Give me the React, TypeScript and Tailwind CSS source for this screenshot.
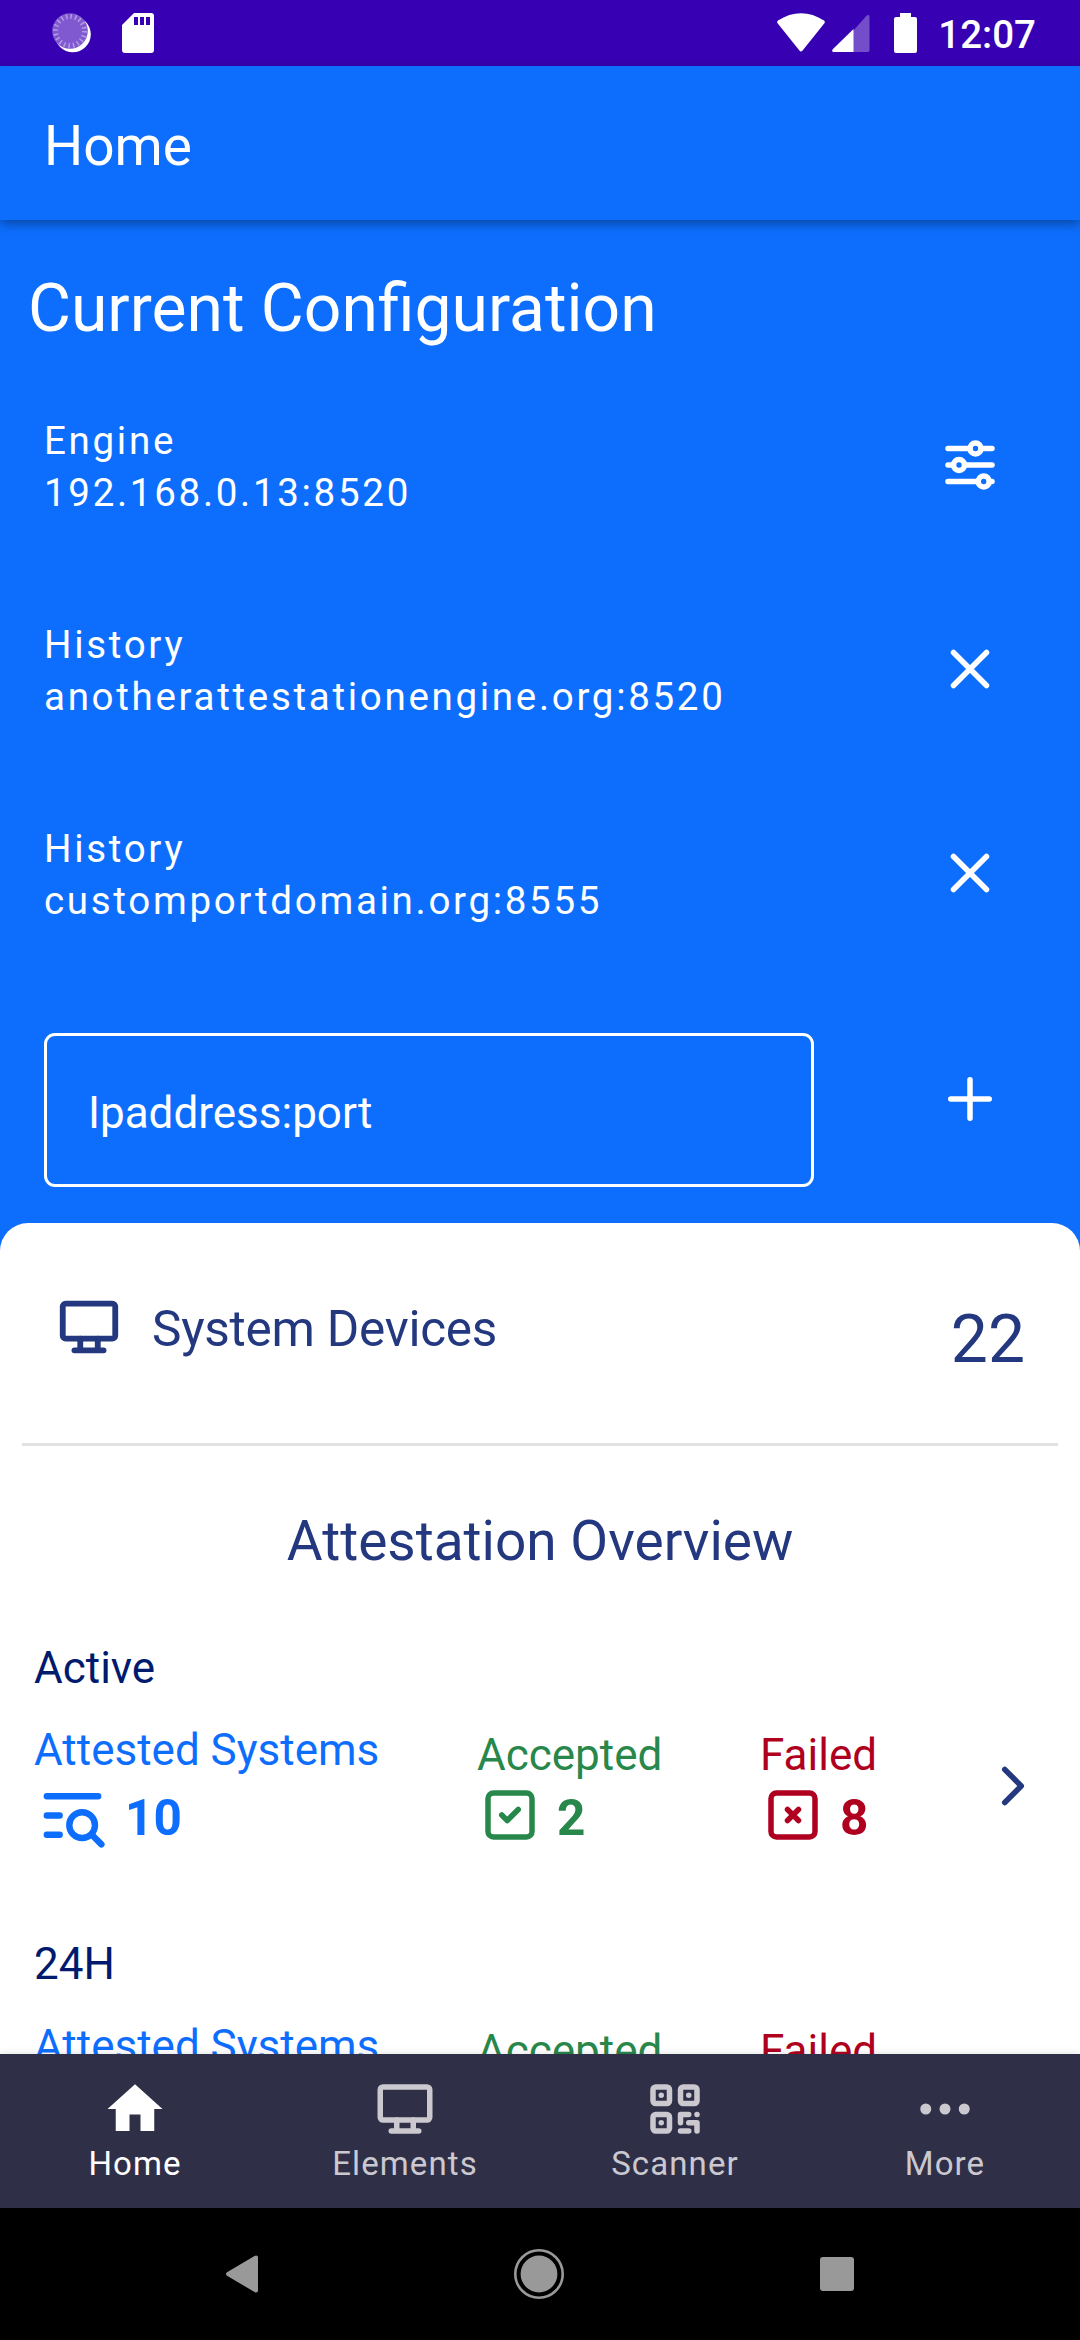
import type { ReactNode } from "react";

type IconProps = { className: string; children: ReactNode };

function Icon({ className, children }: IconProps) {
  return (
    <svg viewBox="0 0 24 24" fill="none" stroke="currentColor" strokeWidth={2} strokeLinecap="round" strokeLinejoin="round" className={`block shrink-0 ${className}`}>
      {children}
    </svg>
  );
}

const desktop = (
  <>
    <rect x="3" y="4" width="18" height="12" rx="1" />
    <path d="M7 20h10M9 16v4M15 16v4" />
  </>
);

const cross = <path d="M18 6L6 18M6 6l12 12" />;

function StatusBar() {
  return (
    <header className="flex h-[66px] shrink-0 items-center bg-[#3700b3] pl-[50px] pr-[44px] text-white">
      <svg viewBox="0 0 44 44" className="block h-[44px] w-[44px]">
        <circle cx="22.800" cy="23.300" r="18" fill="#fff" />
        <circle cx="20" cy="20" r="17.800" fill="#8058d0" />
        <circle cx="20" cy="20" r="14.500" fill="none" stroke="#b39be3" strokeWidth="5" strokeDasharray="1.5 3.055" />
      </svg>
      <svg viewBox="0 0 32 40" className="ml-[28px] block h-[40px] w-[32px]">
        <path d="M12 0h17a3 3 0 0 1 3 3v34a3 3 0 0 1-3 3H3a3 3 0 0 1-3-3V12z" fill="#fff" />
        <path d="M12 4h4v8h-4zM18 4h4v8h-4zM24 4h4v8h-4z" fill="#3700b3" />
      </svg>
      <div className="ml-auto flex items-center">
        <svg viewBox="0 0 48 40" className="block h-[40px] w-[48px]">
          <path d="M.8 10.5C-.2 9.300 0 8.300 1 7.600C15.500-2.200 32.500-2.200 47 7.600c1 .7 1.200 1.700.2 2.900L25.600 37.500c-1 1.300-2.200 1.300-3.200 0z" fill="#fff" />
        </svg>
        <svg viewBox="0 0 38 40" className="ml-[7px] block h-[40px] w-[38px]">
          <path d="M21 18L34.500 2.700C36 1.200 37.500 2 37.500 3.500V37c0 1.300-.7 2-2 2H21z" fill="#734dca" />
          <path d="M21.500 16v23H2c-2 0-2.400-1.600-1-3z" fill="#fff" />
        </svg>
        <svg viewBox="0 0 23 40" className="ml-[24px] block h-[40px] w-[23px]">
          <path d="M6 0h11v4h4a2 2 0 0 1 2 2v32a2 2 0 0 1-2 2H2a2 2 0 0 1-2-2V6a2 2 0 0 1 2-2h4z" fill="#fff" />
        </svg>
        <span className="ml-[21px] mt-[3px] text-[38.5px] leading-[45px] font-medium">12:07</span>
      </div>
    </header>
  );
}

function ConfigRow({ label, value, children }: { label: string; value: string; children: ReactNode }) {
  return (
    <div className="flex h-[204px] items-center justify-between pl-[44px] pr-[77px]">
      <div className="mt-[4px] text-[38.5px] leading-[52px] tracking-[2.7px]">
        <div>{label}</div>
        <div>{value}</div>
      </div>
      <Icon className="h-[66px] w-[66px]">{children}</Icon>
    </div>
  );
}

function OverviewBlock({ title, attested, accepted, failed }: { title: string; attested: number; accepted: number; failed: number }) {
  return (
    <section className="h-[296px] shrink-0 pl-[34px] text-[44px] leading-[52px]">
      <h3 className="text-[#001a6e]">{title}</h3>
      <div className="flex">
        <div className="mt-[30px] w-[443px] text-[#0d6efd]">
          <div>Attested Systems</div>
          <div className="flex h-[77px] items-center">
            <Icon className="mt-px h-[77px] w-[77px]">
              <circle cx="15" cy="15" r="4" />
              <path d="M18.500 18.500L21 21M4 6h16M4 12h4M4 18h4" />
            </Icon>
            <span className="ml-[14px] mt-[7px] text-[49.5px] font-bold">{attested}</span>
          </div>
        </div>
        <div className="mt-[35px] w-[283px] text-[#28874a]">
          <div>Accepted</div>
          <div className="flex h-[66px] items-center">
            <Icon className="mt-[2px] h-[66px] w-[66px]">
              <rect x="4" y="4" width="16" height="16" rx="2" />
              <path d="M9 12l2 2l4-4" />
            </Icon>
            <span className="ml-[14px] mt-[8px] text-[49.5px] font-bold">{accepted}</span>
          </div>
        </div>
        <div className="mt-[35px] w-[220px] text-[#b00020]">
          <div>Failed</div>
          <div className="flex h-[66px] items-center">
            <Icon className="mt-[2px] h-[66px] w-[66px]">
              <rect x="4" y="4" width="16" height="16" rx="2" />
              <path d="M10 10l4 4m0-4l-4 4" />
            </Icon>
            <span className="ml-[14px] mt-[8px] text-[49.5px] font-bold">{failed}</span>
          </div>
        </div>
        <Icon className="mt-[59px] h-[66px] w-[66px] text-[#23387f]">
          <path d="M9 6l6 6l-6 6" />
        </Icon>
      </div>
    </section>
  );
}

function NavItem({ label, active, children }: { label: string; active?: boolean; children: ReactNode }) {
  return (
    <div className={`flex flex-1 flex-col items-center pt-[22px] ${active ? "text-white" : "text-[#cbc8d0]"}`}>
      <Icon className="h-[66px] w-[66px]">{children}</Icon>
      <span className="mt-[2px] text-[33px] leading-[39px] tracking-[1.1px]">{label}</span>
    </div>
  );
}

export default function App() {
  return (
    <div className="flex h-[2340px] w-[1080px] flex-col overflow-hidden bg-[#0d6efd] font-['Roboto',sans-serif] text-white">
      <StatusBar />
      <div className="relative z-10 flex h-[154px] shrink-0 items-center bg-[#0d6efd] pl-[44px] shadow-[0_4px_10px_rgba(0,0,0,0.35)]">
        <h1 className="mt-[6px] text-[55px] leading-[64px]">Home</h1>
      </div>

      <main className="flex h-[1834px] flex-col overflow-hidden">
        <h2 className="mt-[50px] pl-[28px] text-[66px] leading-[78px]">Current Configuration</h2>
        <div className="mt-[15px]">
          <ConfigRow label="Engine" value="192.168.0.13:8520">
            <circle cx="14" cy="6" r="2" />
            <circle cx="8" cy="12" r="2" />
            <circle cx="17" cy="18" r="2" />
            <path d="M4 6h8M16 6h4M4 12h2M10 12h10M4 18h11M19 18h1" />
          </ConfigRow>
          <ConfigRow label="History" value="anotherattestationengine.org:8520">{cross}</ConfigRow>
          <ConfigRow label="History" value="customportdomain.org:8555">{cross}</ConfigRow>
        </div>
        <div className="mt-[58px] flex h-[154px] shrink-0 pl-[44px] pr-[77px]">
          <div className="flex h-[154px] w-[770px] items-center rounded-[11px] border-[3px] border-white pl-[41px] text-[44px] leading-[52px]">
            <span className="mt-[6px]">Ipaddress:port</span>
          </div>
          <Icon className="ml-auto mt-[33px] h-[66px] w-[66px]">
            <path d="M12 5v14M5 12h14" />
          </Icon>
        </div>

        <div className="mt-[36px] flex grow flex-col rounded-t-[28px] bg-white text-[#23387f]">
          <div className="mx-[22px] flex h-[223px] shrink-0 items-center border-b-[3px] border-[#e1e3e1] pl-[32px] pr-[33px]">
            <Icon className="-mt-[12px] h-[70px] w-[70px]">{desktop}</Icon>
            <span className="ml-[28px] mt-[-8px] text-[49.5px] leading-[58px] tracking-[-0.25px]">System Devices</span>
            <span className="ml-auto mt-[13px] text-[66px] leading-[78px]">22</span>
          </div>
          <h2 className="mt-[63px] text-center text-[55px] leading-[64px]">Attestation Overview</h2>
          <div className="mt-[69px] flex h-[412px] flex-col overflow-hidden">
            <OverviewBlock title="Active" attested={10} accepted={2} failed={8} />
            <OverviewBlock title="24H" attested={10} accepted={2} failed={8} />
          </div>
        </div>
      </main>

      <nav className="relative z-10 flex h-[154px] shrink-0 bg-[#2f3047] shadow-[0_0_8px_rgba(0,0,0,0.12)]">
        <NavItem label="Home" active>
          <path d="M10 20v-6h4v6h5v-8h3L12 3 2 12h3v8z" fill="currentColor" stroke="none" />
        </NavItem>
        <NavItem label="Elements">{desktop}</NavItem>
        <NavItem label="Scanner">
          <rect x="4" y="4" width="6" height="6" rx="1" />
          <rect x="14" y="4" width="6" height="6" rx="1" />
          <rect x="4" y="14" width="6" height="6" rx="1" />
          <path d="M7 17v.01M17 7v.01M7 7v.01M14 14h3M20 14v.01M14 14v3M14 20h3M17 17h3M20 17v3" />
        </NavItem>
        <NavItem label="More">
          <circle cx="5" cy="12" r="1" />
          <circle cx="12" cy="12" r="1" />
          <circle cx="19" cy="12" r="1" />
        </NavItem>
      </nav>

      <footer className="relative z-20 flex h-[132px] shrink-0 items-center justify-between bg-black pl-[226px] pr-[226px] text-[#999999]">
        <svg viewBox="0 0 32 38" className="block h-[38px] w-[32px]">
          <path d="M1 17.300L28.500 1C30.500-.2 32 .8 32 2.500v33c0 1.700-1.500 2.700-3.500 1.500L1 20.700C-.3 19.800-.3 18.200 1 17.300z" fill="currentColor" />
        </svg>
        <svg viewBox="0 0 50 50" className="block h-[50px] w-[50px]">
          <circle cx="25" cy="25" r="23.7" fill="none" stroke="currentColor" strokeWidth="2.600" />
          <circle cx="25" cy="25" r="18.400" fill="currentColor" />
        </svg>
        <span className="block h-[34px] w-[34px] rounded-[3px] bg-[#999999]" />
      </footer>
    </div>
  );
}
